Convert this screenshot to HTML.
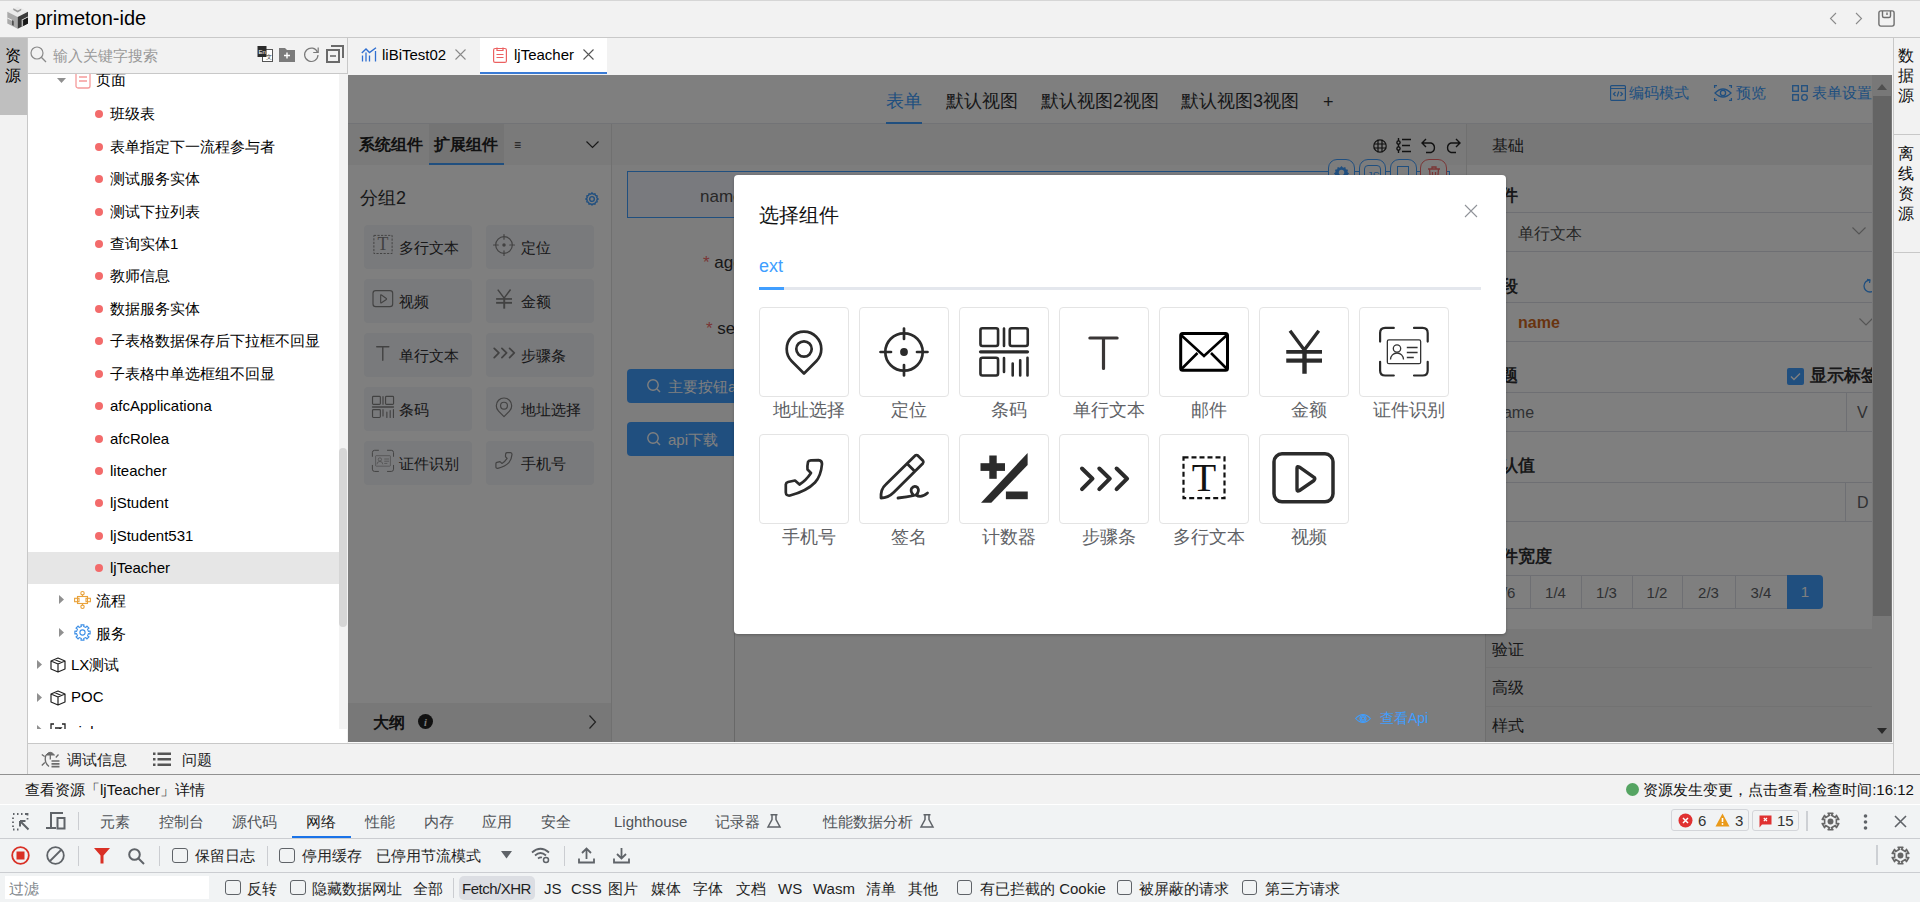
<!DOCTYPE html>
<html><head><meta charset="utf-8">
<style>
*{box-sizing:border-box}
html,body{margin:0;padding:0}
body{width:1920px;height:902px;overflow:hidden;position:relative;background:#f2f2f2;font-family:"Liberation Sans",sans-serif;color:#000}
.a{position:absolute}
.t{position:absolute;white-space:nowrap;line-height:1}
svg{position:absolute;overflow:visible}
</style></head><body>

<!-- TITLE BAR -->
<div class="a" style="left:0;top:0;width:1920px;height:1px;background:#d6d6d6"></div>
<div class="a" style="left:0;top:37px;width:1920px;height:1px;background:#c9c9c9"></div>
<div class="t" style="left:35px;top:8px;font-size:20px">primeton-ide</div>

<!-- LEFT STRIP -->
<div class="a" style="left:0;top:38px;width:27px;height:77px;background:#bfbfbf"></div>
<div class="a" style="left:27px;top:38px;width:1px;height:736px;background:#c8c8c8"></div>
<div class="t" style="left:5px;top:46px;font-size:16px;line-height:20px;width:16px;white-space:normal">资源</div>

<!-- LEFT PANEL -->
<div class="a" style="left:28px;top:73px;width:319px;height:1px;background:#c8c8c8"></div>
<div class="a" style="left:28px;top:74px;width:319px;height:669px;background:#fff"></div><div class="a" style="left:28px;top:74px;width:311px;height:655px;overflow:hidden" id="tree"><div class="a" style="left:67px;top:36px;width:8px;height:8px;border-radius:50%;background:#f36b6b"></div>
<div class="t" style="left:82px;top:24px;font-size:15px;line-height:32px">班级表</div>
<div class="a" style="left:67px;top:69px;width:8px;height:8px;border-radius:50%;background:#f36b6b"></div>
<div class="t" style="left:82px;top:57px;font-size:15px;line-height:32px">表单指定下一流程参与者</div>
<div class="a" style="left:67px;top:101px;width:8px;height:8px;border-radius:50%;background:#f36b6b"></div>
<div class="t" style="left:82px;top:89px;font-size:15px;line-height:32px">测试服务实体</div>
<div class="a" style="left:67px;top:134px;width:8px;height:8px;border-radius:50%;background:#f36b6b"></div>
<div class="t" style="left:82px;top:122px;font-size:15px;line-height:32px">测试下拉列表</div>
<div class="a" style="left:67px;top:166px;width:8px;height:8px;border-radius:50%;background:#f36b6b"></div>
<div class="t" style="left:82px;top:154px;font-size:15px;line-height:32px">查询实体1</div>
<div class="a" style="left:67px;top:198px;width:8px;height:8px;border-radius:50%;background:#f36b6b"></div>
<div class="t" style="left:82px;top:186px;font-size:15px;line-height:32px">教师信息</div>
<div class="a" style="left:67px;top:231px;width:8px;height:8px;border-radius:50%;background:#f36b6b"></div>
<div class="t" style="left:82px;top:219px;font-size:15px;line-height:32px">数据服务实体</div>
<div class="a" style="left:67px;top:263px;width:8px;height:8px;border-radius:50%;background:#f36b6b"></div>
<div class="t" style="left:82px;top:251px;font-size:15px;line-height:32px">子表格数据保存后下拉框不回显</div>
<div class="a" style="left:67px;top:296px;width:8px;height:8px;border-radius:50%;background:#f36b6b"></div>
<div class="t" style="left:82px;top:284px;font-size:15px;line-height:32px">子表格中单选框组不回显</div>
<div class="a" style="left:67px;top:328px;width:8px;height:8px;border-radius:50%;background:#f36b6b"></div>
<div class="t" style="left:82px;top:316px;font-size:15px;line-height:32px">afcApplicationa</div>
<div class="a" style="left:67px;top:361px;width:8px;height:8px;border-radius:50%;background:#f36b6b"></div>
<div class="t" style="left:82px;top:349px;font-size:15px;line-height:32px">afcRolea</div>
<div class="a" style="left:67px;top:393px;width:8px;height:8px;border-radius:50%;background:#f36b6b"></div>
<div class="t" style="left:82px;top:381px;font-size:15px;line-height:32px">liteacher</div>
<div class="a" style="left:67px;top:425px;width:8px;height:8px;border-radius:50%;background:#f36b6b"></div>
<div class="t" style="left:82px;top:413px;font-size:15px;line-height:32px">ljStudent</div>
<div class="a" style="left:67px;top:458px;width:8px;height:8px;border-radius:50%;background:#f36b6b"></div>
<div class="t" style="left:82px;top:446px;font-size:15px;line-height:32px">ljStudent531</div>
<div class="a" style="left:0;top:478px;width:311px;height:32px;background:#e6e6e6"></div>
<div class="a" style="left:67px;top:490px;width:8px;height:8px;border-radius:50%;background:#f36b6b"></div>
<div class="t" style="left:82px;top:478px;font-size:15px;line-height:32px">ljTeacher</div>
<svg style="left:29px;top:4px" width="10" height="6" viewBox="0 0 10 6"><path d="M0 0 h9 l-4.5 5 z" fill="#909090"/></svg>
<svg style="left:47px;top:-5px" width="16" height="20" viewBox="0 0 16 20"><rect x="1" y="1" width="14" height="18" rx="2" fill="none" stroke="#f59a9a" stroke-width="1.3"/><path d="M4 8 h8 M4 12 h8" stroke="#f59a9a" stroke-width="1.3"/></svg>
<div class="t" style="left:68px;top:-10px;font-size:15px;line-height:32px">页面</div>
<svg style="left:31px;top:521px" width="6" height="10" viewBox="0 0 6 10"><path d="M0 0 v9 l5 -4.5 z" fill="#909090"/></svg>
<svg style="left:46px;top:517px" width="17" height="18" viewBox="0 0 17 18" fill="none" stroke="#e9a23b" stroke-width="1.1"><circle cx="8.5" cy="2.2" r="1.7"/><circle cx="8.5" cy="15.8" r="1.7"/><path d="M8.5 3.9 V5.5 M8.5 12.5 V14.1"/><rect x="3.5" y="5.5" width="10" height="7"/><rect x="0.6" y="7.3" width="4.4" height="3.4"/><rect x="12" y="7.3" width="4.4" height="3.4"/></svg>
<div class="t" style="left:68px;top:511px;font-size:15px;line-height:32px">流程</div>
<svg style="left:31px;top:554px" width="6" height="10" viewBox="0 0 6 10"><path d="M0 0 v9 l5 -4.5 z" fill="#909090"/></svg>
<svg style="left:46px;top:550px" width="17" height="17" viewBox="0 0 17 17" fill="none" stroke="#3d8fe6" stroke-width="1.1" stroke-linejoin="round"><path d="M6.95 0.86 L10.05 0.86 L9.65 2.61 L11.85 3.52 L12.81 2.00 L15.00 4.19 L13.48 5.15 L14.39 7.35 L16.14 6.95 L16.14 10.05 L14.39 9.65 L13.48 11.85 L15.00 12.81 L12.81 15.00 L11.85 13.48 L9.65 14.39 L10.05 16.14 L6.95 16.14 L7.35 14.39 L5.15 13.48 L4.19 15.00 L2.00 12.81 L3.52 11.85 L2.61 9.65 L0.86 10.05 L0.86 6.95 L2.61 7.35 L3.52 5.15 L2.00 4.19 L4.19 2.00 L5.15 3.52 L7.35 2.61 Z"/><circle cx="8.5" cy="8.5" r="2.6"/></svg>
<div class="t" style="left:68px;top:544px;font-size:15px;line-height:32px">服务</div>
<svg style="left:9px;top:586px" width="6" height="10" viewBox="0 0 6 10"><path d="M0 0 v9 l5 -4.5 z" fill="#909090"/></svg>
<svg style="left:22px;top:583px" width="16" height="16" viewBox="0 0 16 16" fill="none" stroke="#222" stroke-width="1.2" stroke-linejoin="round"><path d="M8 1 L15 4 V12 L8 15 L1 12 V4 Z M1 4 L8 7 L15 4 M8 7 V15 M4.5 2.5 L11.5 5.5"/></svg>
<div class="t" style="left:43px;top:575px;font-size:15px;line-height:32px">LX测试</div>
<svg style="left:9px;top:619px" width="6" height="10" viewBox="0 0 6 10"><path d="M0 0 v9 l5 -4.5 z" fill="#909090"/></svg>
<svg style="left:22px;top:616px" width="16" height="16" viewBox="0 0 16 16" fill="none" stroke="#222" stroke-width="1.2" stroke-linejoin="round"><path d="M8 1 L15 4 V12 L8 15 L1 12 V4 Z M1 4 L8 7 L15 4 M8 7 V15 M4.5 2.5 L11.5 5.5"/></svg>
<div class="t" style="left:43px;top:607px;font-size:15px;line-height:32px">POC</div>
<div class="a" style="left:0;top:645px;width:311px;height:10px;overflow:hidden">
<svg style="left:9px;top:6px" width="6" height="10" viewBox="0 0 6 10"><path d="M0 0 v9 l5 -4.5 z" fill="#909090"/></svg>
<svg style="left:22px;top:3.5px" width="16" height="16" viewBox="0 0 16 16" fill="none" stroke="#222" stroke-width="1.3"><path d="M4 1 H1 V15 H4 M12 1 H15 V15 H12"/><path d="M5 5 H11 L5 11 H11"/></svg>
<div class="t" style="left:43px;top:-3px;font-size:15px;line-height:32px">ciolo</div>
</div>
</div>
<div class="a" style="left:339px;top:74px;width:8px;height:655px;background:#f3f3f3"></div>
<div class="a" style="left:339px;top:448px;width:8px;height:179px;background:#d6d6d6;border-radius:4px"></div>
<div class="a" style="left:347px;top:38px;width:1px;height:36px;background:#c8c8c8"></div>
<div class="t" style="left:53px;top:48px;font-size:15px;color:#999">输入关键字搜索</div>


<!-- search icons -->
<svg style="left:30px;top:46px" width="17" height="17" viewBox="0 0 17 17"><circle cx="7" cy="7" r="6" fill="none" stroke="#8a8a8a" stroke-width="1.2"/><line x1="11.3" y1="11.3" x2="16" y2="16" stroke="#8a8a8a" stroke-width="1.3"/></svg>
<svg style="left:257px;top:45px" width="16" height="18" viewBox="0 0 16 18"><rect x="5.5" y="4.5" width="10" height="12" fill="#fff" stroke="#555" stroke-width="1"/><rect x="0.5" y="1" width="9" height="11" fill="#2b2b2b"/><text x="1.5" y="8.5" font-size="6" fill="#fff" font-family="Liberation Sans">En</text><text x="9" y="14" font-size="6" fill="#333" font-family="Liberation Sans">文</text></svg>
<svg style="left:278px;top:46px" width="18" height="17" viewBox="0 0 18 17"><path d="M1 2 h6 l2 2 h8 v12 h-16 z" fill="#7b7b7b"/><path d="M9 6.5 v6 M6 9.5 h6" stroke="#fff" stroke-width="1.4"/></svg>
<svg style="left:303px;top:46px" width="17" height="17" viewBox="0 0 17 17"><path d="M14.5 6.2 A6.7 6.7 0 1 0 15 9" fill="none" stroke="#7a7a7a" stroke-width="1.2"/><path d="M15.2 1.5 v5 h-5" fill="none" stroke="#7a7a7a" stroke-width="1.2"/></svg>
<svg style="left:326px;top:45px" width="18" height="18" viewBox="0 0 18 18"><path d="M5 1 h12 v12" fill="none" stroke="#6a6a6a" stroke-width="2"/><rect x="1" y="5" width="12" height="12" fill="none" stroke="#6a6a6a" stroke-width="2"/><path d="M4 11 h6" stroke="#6a6a6a" stroke-width="1.6"/></svg>

<!-- TAB BAR -->
<div class="a" style="left:480px;top:38px;width:127px;height:36px;background:#fff"></div>
<div class="a" style="left:480px;top:72px;width:127px;height:2px;background:#3a7bd5"></div>
<svg style="left:361px;top:47px" width="16" height="15" viewBox="0 0 16 15" fill="none" stroke="#2f6fd1" stroke-width="1.4"><path d="M0.8 6 L5 2 L8.5 5.5 L15 0.8"/><path d="M1.5 8.5 V14.5 M5 5.5 V14.5 M8.5 8.5 V14.5 M14.5 4 V14.5" stroke-width="1.3"/></svg>
<div class="t" style="left:382px;top:47px;font-size:15px">liBiTest02</div>
<svg style="left:455px;top:49px" width="11" height="11" viewBox="0 0 11 11"><path d="M0.5 0.5 L10.5 10.5 M10.5 0.5 L0.5 10.5" stroke="#8a8a8a" stroke-width="1.1"/></svg>
<svg style="left:493px;top:47px" width="14" height="16" viewBox="0 0 14 16" fill="none" stroke="#ec6161" stroke-width="1.2"><rect x="0.6" y="1.5" width="12.8" height="13.9" rx="1.5"/><path d="M4 0.6 V3.5 H10 V0.6 M3.5 7.5 H10.5 M3.5 10.5 H10.5"/></svg>
<div class="t" style="left:514px;top:47px;font-size:15px">ljTeacher</div>
<svg style="left:583px;top:49px" width="11" height="11" viewBox="0 0 11 11"><path d="M0.5 0.5 L10.5 10.5 M10.5 0.5 L0.5 10.5" stroke="#555" stroke-width="1.1"/></svg>

<!-- CONTENT -->
<div class="a" id="content" style="left:348px;top:75px;width:1544px;height:667px;background:#fff;overflow:hidden"><div class="a" style="left:-348px;top:-75px;width:1920px;height:902px">
<!-- view tabs -->
<div class="a" style="left:348px;top:123px;width:1524px;height:1px;background:#e4e7ed"></div>
<div class="t" style="left:886px;top:92px;font-size:18px;color:#409eff">表单</div>
<div class="a" style="left:886px;top:122px;width:36px;height:2px;background:#409eff"></div>
<div class="t" style="left:946px;top:92px;font-size:18px;color:#303133">默认视图</div>
<div class="t" style="left:1041px;top:92px;font-size:18px;color:#303133">默认视图2视图</div>
<div class="t" style="left:1181px;top:92px;font-size:18px;color:#303133">默认视图3视图</div>
<div class="t" style="left:1323px;top:93px;font-size:18px;color:#303133">+</div>
<svg style="left:1610px;top:85px" width="16" height="16" viewBox="0 0 16 16" fill="none" stroke="#409eff" stroke-width="1.2"><rect x="0.6" y="0.6" width="14.8" height="14.8" rx="1"/><path d="M0.6 3.5 h14.8 M5.5 7 l-2 2 2 2 M10.5 7 l2 2 -2 2 M8.8 6.5 l-1.6 5"/></svg>
<div class="t" style="left:1629px;top:85px;font-size:15px;color:#409eff">编码模式</div>
<svg style="left:1714px;top:85px" width="18" height="16" viewBox="0 0 18 16" fill="none" stroke="#409eff" stroke-width="1.3"><path d="M1 8 Q9 0 17 8 Q9 16 1 8 Z"/><circle cx="9" cy="8" r="2.6"/><path d="M0.6 3 v-2.4 h2.4 M17.4 3 v-2.4 h-2.4 M0.6 13 v2.4 h2.4 M17.4 13 v2.4 h-2.4"/></svg>
<div class="t" style="left:1736px;top:85px;font-size:15px;color:#409eff">预览</div>
<svg style="left:1792px;top:85px" width="16" height="16" viewBox="0 0 16 16" fill="none" stroke="#409eff" stroke-width="1.3"><rect x="0.7" y="0.7" width="5.6" height="5.6"/><rect x="9.7" y="0.7" width="5.6" height="5.6"/><rect x="0.7" y="9.7" width="5.6" height="5.6"/><circle cx="12.5" cy="12.5" r="2.8"/></svg>
<div class="t" style="left:1812px;top:85px;font-size:15px;color:#409eff">表单设置</div>

<!-- left components panel -->
<div class="a" style="left:348px;top:124px;width:263px;height:41px;background:#f4f4f4"></div>
<div class="a" style="left:429px;top:124px;width:75px;height:41px;background:#e8e8e8"></div>
<div class="a" style="left:429px;top:163px;width:75px;height:2px;background:#409eff"></div>
<div class="t" style="left:359px;top:137px;font-size:16px;font-weight:bold;color:#222">系统组件</div>
<div class="t" style="left:434px;top:137px;font-size:16px;font-weight:bold;color:#222">扩展组件</div>
<div class="t" style="left:514px;top:139px;font-size:12px;color:#333">&#8801;</div>
<svg style="left:586px;top:141px" width="13" height="8" viewBox="0 0 13 8"><path d="M0.5 0.5 l6 6 6-6" fill="none" stroke="#333" stroke-width="1.2"/></svg>
<div class="a" style="left:611px;top:124px;width:1px;height:618px;background:#e0e0e0"></div>
<div class="t" style="left:360px;top:189px;font-size:18px;color:#303133">分组2</div>
<svg style="left:585px;top:192px" width="14" height="14" viewBox="0 0 24 24" fill="none" stroke="#409eff" stroke-width="2.4"><path d="M12 1.5 l2 2.2 3-.6 .9 2.9 2.9.9 -.6 3 2.2 2 -2.2 2 .6 3 -2.9.9 -.9 2.9 -3-.6 -2 2.2 -2-2.2 -3 .6 -.9-2.9 -2.9-.9 .6-3 -2.2-2 2.2-2 -.6-3 2.9-.9 .9-2.9 3 .6 z"/><circle cx="12" cy="12" r="4"/></svg>
<div class="a" style="left:364px;top:225px;width:108px;height:44px;background:#f3f4f8;border-radius:4px"></div>
<svg style="left:363.0px;top:224.5px" width="40" height="40" viewBox="0 0 90 90"><rect x="24.5" y="23.4" width="41" height="40.7" fill="none" stroke="#858585" stroke-width="2.2" stroke-dasharray="5 3"/><text x="45" y="57" text-anchor="middle" font-family="Liberation Serif" font-size="40" fill="#858585">T</text></svg>
<div class="t" style="left:399px;top:240px;font-size:15px;color:#303133">多行文本</div>
<div class="a" style="left:486px;top:225px;width:108px;height:44px;background:#f3f4f8;border-radius:4px"></div>
<svg style="left:483.8px;top:224.5px" width="40" height="40" viewBox="0 0 90 90"><circle cx="45" cy="45" r="18.7" fill="none" stroke="#858585" stroke-linecap="round" stroke-linejoin="round" stroke-width="2.7"/><path d="M21.5 45 H32 M58 45 H68.5 M45 21.5 V32 M45 58 V68.5" fill="none" stroke="#858585" stroke-linecap="round" stroke-linejoin="round" stroke-width="2.7"/><circle cx="45" cy="45" r="3.9" fill="#858585"/></svg>
<div class="t" style="left:521px;top:240px;font-size:15px;color:#303133">定位</div>
<div class="a" style="left:364px;top:279px;width:108px;height:44px;background:#f3f4f8;border-radius:4px"></div>
<svg style="left:368.0px;top:283.5px" width="30" height="30" viewBox="0 0 90 90"><rect x="15" y="19.8" width="59" height="48" rx="8" fill="none" stroke="#858585" stroke-width="3.5"/><path d="M38 34 V55.5 Q38 58 40.5 56.5 L55 46.5 Q56.5 44.8 55 43.3 L40.5 33.2 Q38 31.8 38 34 Z" fill="none" stroke="#858585" stroke-width="3.4" stroke-linejoin="round"/></svg>
<div class="t" style="left:399px;top:294px;font-size:15px;color:#303133">视频</div>
<div class="a" style="left:486px;top:279px;width:108px;height:44px;background:#f3f4f8;border-radius:4px"></div>
<svg style="left:483.8px;top:278.5px" width="40" height="40" viewBox="0 0 90 90"><path d="M31 23.8 L45.3 43 L59.75 23.8" fill="none" stroke="#858585" stroke-width="3.4"/><rect x="27.25" y="43" width="35.75" height="3.75" fill="#858585"/><rect x="27.25" y="51.5" width="35.75" height="4.2" fill="#858585"/><rect x="43.3" y="43" width="4.4" height="23.75" fill="#858585"/></svg>
<div class="t" style="left:521px;top:294px;font-size:15px;color:#303133">金额</div>
<div class="a" style="left:364px;top:333px;width:108px;height:44px;background:#f3f4f8;border-radius:4px"></div>
<svg style="left:363.0px;top:332.5px" width="40" height="40" viewBox="0 0 90 90"><path d="M30.9 31 H58.1 M44.5 31 V61.5" fill="none" stroke="#858585" stroke-width="3.2" stroke-linecap="round"/></svg>
<div class="t" style="left:399px;top:348px;font-size:15px;color:#303133">单行文本</div>
<div class="a" style="left:486px;top:333px;width:108px;height:44px;background:#f3f4f8;border-radius:4px"></div>
<svg style="left:483.8px;top:332.5px" width="40" height="40" viewBox="0 0 90 90"><path d="M23 34.5 L33.5 44.7 L23 55.2 M40.3 34.5 L50.8 44.7 L40.3 55.2 M57.6 34.5 L68.1 44.7 L57.6 55.2" fill="none" stroke="#858585" stroke-linecap="round" stroke-linejoin="round" stroke-width="4"/></svg>
<div class="t" style="left:521px;top:348px;font-size:15px;color:#303133">步骤条</div>
<div class="a" style="left:364px;top:387px;width:108px;height:44px;background:#f3f4f8;border-radius:4px"></div>
<svg style="left:363.0px;top:386.5px" width="40" height="40" viewBox="0 0 90 90"><g fill="none" stroke="#858585" stroke-linecap="round" stroke-linejoin="round" stroke-width="2.6"><rect x="21.45" y="21.25" width="17.6" height="17.8" rx="2"/><rect x="50.75" y="21.25" width="18" height="17.8" rx="2"/><rect x="21.45" y="50.75" width="17.6" height="17.8" rx="2"/><path d="M45 21.5 V39 M45 51 V65 M53.7 56.5 V68.5 M61.2 53.2 V68.5 M68.5 50.8 V68.5"/></g><path d="M21.5 44.85 H68.5" fill="none" stroke="#858585" stroke-linecap="round" stroke-linejoin="round" stroke-width="3.2"/></svg>
<div class="t" style="left:399px;top:402px;font-size:15px;color:#303133">条码</div>
<div class="a" style="left:486px;top:387px;width:108px;height:44px;background:#f3f4f8;border-radius:4px"></div>
<svg style="left:483.8px;top:386.5px" width="40" height="40" viewBox="0 0 90 90"><path d="M45 66.5 L32.77 54.23 A17.3 17.3 0 1 1 57.23 54.23 Z" fill="none" stroke="#858585" stroke-linecap="round" stroke-linejoin="round" stroke-width="2.7"/><circle cx="45" cy="42" r="7.7" fill="none" stroke="#858585" stroke-linecap="round" stroke-linejoin="round" stroke-width="2.7"/></svg>
<div class="t" style="left:521px;top:402px;font-size:15px;color:#303133">地址选择</div>
<div class="a" style="left:364px;top:441px;width:108px;height:44px;background:#f3f4f8;border-radius:4px"></div>
<svg style="left:363.0px;top:440.5px" width="40" height="40" viewBox="0 0 90 90"><g fill="none" stroke="#858585" stroke-linecap="round" stroke-linejoin="round" stroke-width="2.2"><path d="M21.1 34.6 V26 Q21.1 20.9 26.2 20.9 H34.8 M55 20.9 H63.6 Q68.7 20.9 68.7 26 V34.6 M21.1 54.8 V63.4 Q21.1 68.5 26.2 68.5 H34.8 M55 68.5 H63.6 Q68.7 68.5 68.7 63.4 V54.8"/></g><g fill="none" stroke="#858585" stroke-width="1.3"><rect x="28.35" y="32.95" width="33.3" height="23.7" rx="1.5"/><circle cx="38" cy="41.5" r="3.7"/><path d="M31.5 52.5 A6.5 6.5 0 0 1 44.5 52.5 M47.8 40.5 H58.6 M47.8 45.5 H58.6 M47.8 50.5 H54.8"/></g></svg>
<div class="t" style="left:399px;top:456px;font-size:15px;color:#303133">证件识别</div>
<div class="a" style="left:486px;top:441px;width:108px;height:44px;background:#f3f4f8;border-radius:4px"></div>
<svg style="left:483.8px;top:440.5px" width="40" height="40" viewBox="0 0 90 90"><path d="M52 39 L48.5 35.5 Q48 33 49 28 Q49.5 26.5 52 26.3 L59.5 26.2 Q63 26.5 63 30 Q62 42 56 48.5 Q48 57 31 61.5 Q27 62 26.8 58.5 L26.8 50.5 Q27 48.5 29 48 L36 46.5 L40.5 50.5 Q47 46.5 52 39 Z" fill="none" stroke="#858585" stroke-linecap="round" stroke-linejoin="round" stroke-width="2.7"/></svg>
<div class="t" style="left:521px;top:456px;font-size:15px;color:#303133">手机号</div>
<div class="a" style="left:348px;top:703px;width:263px;height:39px;background:#f0f0f0"></div>
<div class="t" style="left:373px;top:715px;font-size:16px;font-weight:bold;color:#222">大纲</div>
<svg style="left:418px;top:714px" width="15" height="15" viewBox="0 0 16 16"><circle cx="8" cy="8" r="8" fill="#222"/><text x="8" y="12.5" text-anchor="middle" font-size="11" font-style="italic" font-weight="bold" fill="#fff" font-family="Liberation Serif">i</text></svg>
<svg style="left:589px;top:715px" width="8" height="14" viewBox="0 0 8 14"><path d="M0.5 0.5 l6 6.5 -6 6.5" fill="none" stroke="#444" stroke-width="1.2"/></svg>

<!-- canvas -->
<div class="a" style="left:612px;top:124px;width:855px;height:618px;background:#fafafa"></div>
<div class="a" style="left:612px;top:124px;width:855px;height:41px;background:#f5f5f5"></div>
<div class="a" style="left:1466px;top:124px;width:1px;height:505px;background:#e0e0e0"></div>
<div class="a" style="left:734px;top:630px;width:1px;height:112px;background:#d0d0d0"></div>
<svg style="left:1373px;top:139px" width="14" height="14" viewBox="0 0 14 14" fill="none" stroke="#222" stroke-width="1.2"><circle cx="7" cy="7" r="6.2"/><path d="M0.7 5 h12.6 M0.7 9 h12.6 M5 0.7 v12.6 M9 0.7 v12.6"/></svg>
<svg style="left:1396px;top:138px" width="16" height="15" viewBox="0 0 16 15" fill="none" stroke="#222" stroke-width="1.4"><path d="M2.5 0 v15 M6 1.5 h9 M6 7.5 h8 M6 13.5 h9"/><circle cx="2.5" cy="4.5" r="1.6" fill="#fff"/><circle cx="2.5" cy="10.5" r="1.6" fill="#fff"/></svg>
<svg style="left:1421px;top:138px" width="16" height="15" viewBox="0 0 16 15" fill="none" stroke="#222" stroke-width="1.4"><path d="M5 1 l-4 4 4 4 M1 5 h9 a5 5 0 0 1 0 9.5 h-5"/></svg>
<svg style="left:1445px;top:138px" width="16" height="15" viewBox="0 0 16 15" fill="none" stroke="#222" stroke-width="1.4"><path d="M11 1 l4 4 -4 4 M15 5 h-9 a5 5 0 0 0 0 9.5 h5"/></svg>
<!-- selected form item -->
<div class="a" style="left:627px;top:171px;width:823px;height:47px;border:1px solid #409eff;background:#f3f5fc"></div>
<div class="t" style="left:700px;top:188px;font-size:17px;color:#505050">name</div>
<div class="a" style="left:1328px;top:159px;width:27px;height:30px;border:1.3px solid #409eff;border-radius:9px;background:#fafafa"></div>
<div class="a" style="left:1359px;top:159px;width:27px;height:30px;border:1.3px solid #409eff;border-radius:9px;background:#fafafa"></div>
<div class="a" style="left:1390px;top:159px;width:27px;height:30px;border:1.3px solid #409eff;border-radius:9px;background:#fafafa"></div>
<div class="a" style="left:1420px;top:159px;width:27px;height:30px;border:1.3px solid #f56c6c;border-radius:9px;background:#fafafa"></div>
<svg style="left:1335px;top:166px" width="13" height="13" viewBox="0 0 24 24"><path d="M12 0 l3 3 4-1 1 4 4 1 -1 4 3 3 -3 3 1 4 -4 1 -1 4 -4-1 -3 3 -3-3 -4 1 -1-4 -4-1 1-4 -3-3 3-3 -1-4 4-1 1-4 4 1 z" fill="#409eff"/><circle cx="12" cy="12" r="5" fill="#fafafa"/></svg>
<div class="a" style="left:1364px;top:165px;width:17px;height:20px;border:1.5px solid #409eff;border-radius:4px"></div>
<div class="t" style="left:1367px;top:171px;font-size:11px;color:#409eff">JS</div>
<div class="a" style="left:1397px;top:166px;width:12px;height:16px;border:1.5px solid #409eff"></div>
<svg style="left:1427px;top:166px" width="14" height="16" viewBox="0 0 14 16" fill="none" stroke="#f56c6c" stroke-width="1.3"><path d="M1 3 h12 M5 3 v-2 h4 v2 M2.5 3 l1 12 h7 l1-12 M5.5 6 v7 M8.5 6 v7"/></svg>
<div class="t" style="left:703px;top:254px;font-size:17px;color:#303133"><span style="color:#f56c6c">*</span> age</div>
<div class="t" style="left:706px;top:320px;font-size:17px;color:#303133"><span style="color:#f56c6c">*</span> sex</div>
<div class="a" style="left:627px;top:369px;width:200px;height:34px;background:#409eff;border-radius:4px"></div>
<div class="a" style="left:627px;top:422px;width:160px;height:34px;background:#409eff;border-radius:4px"></div>
<svg style="left:647px;top:379px" width="14" height="14" viewBox="0 0 14 14" fill="none" stroke="#fff" stroke-width="1.4"><circle cx="6" cy="6" r="5.2"/><path d="M10 10 l3 3"/></svg>
<svg style="left:647px;top:432px" width="14" height="14" viewBox="0 0 14 14" fill="none" stroke="#fff" stroke-width="1.4"><circle cx="6" cy="6" r="5.2"/><path d="M10 10 l3 3"/></svg>
<div class="t" style="left:668px;top:379px;font-size:15px;color:#fff">主要按钮a</div>
<div class="t" style="left:668px;top:432px;font-size:15px;color:#fff">api下载</div>

<!-- right panel -->
<div class="a" style="left:1467px;top:124px;width:405px;height:41px;background:#f0f0f0"></div>
<div class="t" style="left:1492px;top:138px;font-size:16px;color:#303133">基础</div>
<div class="t" style="left:1484px;top:187px;font-size:17px;font-weight:bold;color:#303133">组件</div>
<div class="a" style="left:1492px;top:212px;width:380px;height:1px;background:#dcdfe6"></div>
<div class="a" style="left:1492px;top:251px;width:380px;height:1px;background:#dcdfe6"></div>
<div class="t" style="left:1518px;top:226px;font-size:16px;color:#505050">单行文本</div>
<svg style="left:1852px;top:227px" width="14" height="8" viewBox="0 0 14 8"><path d="M0.5 0.5 l6.5 6.5 6.5-6.5" fill="none" stroke="#aaa" stroke-width="1.2"/></svg>
<div class="t" style="left:1484px;top:278px;font-size:17px;font-weight:bold;color:#303133">字段</div>
<svg style="left:1863px;top:279px" width="14" height="14" viewBox="0 0 14 14" fill="none" stroke="#409eff" stroke-width="1.3"><path d="M7 1 a6 6 0 1 0 6 6"/><path d="M4 0.5 l3 0.5 -0.5 3"/></svg>
<div class="a" style="left:1492px;top:302px;width:380px;height:1px;background:#dcdfe6"></div>
<div class="a" style="left:1492px;top:341px;width:380px;height:1px;background:#dcdfe6"></div>
<div class="t" style="left:1518px;top:315px;font-size:16px;font-weight:bold;color:#d2691e">name</div>
<svg style="left:1859px;top:318px" width="14" height="8" viewBox="0 0 14 8"><path d="M0.5 0.5 l6.5 6.5 6.5-6.5" fill="none" stroke="#aaa" stroke-width="1.2"/></svg>
<div class="t" style="left:1484px;top:367px;font-size:17px;font-weight:bold;color:#303133">标题</div>
<div class="a" style="left:1787px;top:368px;width:17px;height:17px;background:#409eff;border-radius:2px"></div>
<svg style="left:1790px;top:372px" width="11" height="9" viewBox="0 0 11 9"><path d="M1 4.5 l3 3 6-6" fill="none" stroke="#fff" stroke-width="1.4"/></svg>
<div class="t" style="left:1810px;top:367px;font-size:17px;font-weight:bold;color:#303133">显示标签</div>
<div class="a" style="left:1492px;top:392px;width:380px;height:1px;background:#dcdfe6"></div>
<div class="a" style="left:1492px;top:431px;width:380px;height:1px;background:#dcdfe6"></div>
<div class="a" style="left:1846px;top:393px;width:1px;height:38px;background:#dcdfe6"></div>
<div class="t" style="left:1494px;top:405px;font-size:16px;color:#606266">name</div>
<div class="t" style="left:1857px;top:405px;font-size:16px;color:#606266">V</div>
<div class="t" style="left:1484px;top:457px;font-size:17px;font-weight:bold;color:#303133">默认值</div>
<div class="a" style="left:1492px;top:482px;width:380px;height:1px;background:#dcdfe6"></div>
<div class="a" style="left:1492px;top:521px;width:380px;height:1px;background:#dcdfe6"></div>
<div class="a" style="left:1845px;top:483px;width:1px;height:38px;background:#dcdfe6"></div>
<div class="t" style="left:1857px;top:495px;font-size:16px;color:#606266">D</div>
<div class="t" style="left:1484px;top:548px;font-size:17px;font-weight:bold;color:#303133">组件宽度</div>
<div class="a" style="left:1480px;top:575px;width:51px;height:34px;border:1px solid #dcdfe6;border-left:0"></div>
<div class="t" style="left:1480px;top:576px;width:50px;line-height:34px;text-align:center;font-size:15px;color:#606266">1/6</div>
<div class="a" style="left:1530px;top:575px;width:52px;height:34px;border:1px solid #dcdfe6;border-left:0"></div>
<div class="t" style="left:1530px;top:576px;width:51px;line-height:34px;text-align:center;font-size:15px;color:#606266">1/4</div>
<div class="a" style="left:1581px;top:575px;width:52px;height:34px;border:1px solid #dcdfe6;border-left:0"></div>
<div class="t" style="left:1581px;top:576px;width:51px;line-height:34px;text-align:center;font-size:15px;color:#606266">1/3</div>
<div class="a" style="left:1632px;top:575px;width:51px;height:34px;border:1px solid #dcdfe6;border-left:0"></div>
<div class="t" style="left:1632px;top:576px;width:50px;line-height:34px;text-align:center;font-size:15px;color:#606266">1/2</div>
<div class="a" style="left:1682px;top:575px;width:54px;height:34px;border:1px solid #dcdfe6;border-left:0"></div>
<div class="t" style="left:1682px;top:576px;width:53px;line-height:34px;text-align:center;font-size:15px;color:#606266">2/3</div>
<div class="a" style="left:1735px;top:575px;width:53px;height:34px;border:1px solid #dcdfe6;border-left:0"></div>
<div class="t" style="left:1735px;top:576px;width:52px;line-height:34px;text-align:center;font-size:15px;color:#606266">3/4</div>
<div class="a" style="left:1787px;top:575px;width:36px;height:34px;background:#409eff;border-radius:0 4px 4px 0"></div>
<div class="t" style="left:1787px;top:575px;width:36px;line-height:34px;text-align:center;font-size:15px;color:#fff">1</div>
<div class="a" style="left:1467px;top:629px;width:18px;height:113px;background:#fafafa"></div>
<div class="a" style="left:1486px;top:629px;width:386px;height:113px;background:#f0f0f0"></div>
<div class="a" style="left:1485px;top:629px;width:1px;height:113px;background:#dcdcdc"></div>
<div class="a" style="left:1486px;top:667px;width:386px;height:1px;background:#e4e4e4"></div>
<div class="a" style="left:1486px;top:706px;width:386px;height:1px;background:#e4e4e4"></div>
<div class="t" style="left:1492px;top:642px;font-size:16px;color:#303133">验证</div>
<div class="t" style="left:1492px;top:680px;font-size:16px;color:#303133">高级</div>
<div class="t" style="left:1492px;top:718px;font-size:16px;color:#303133">样式</div>
<!-- scrollbar -->
<div class="a" style="left:1872px;top:75px;width:20px;height:667px;background:#f0f0f0"></div>
<div class="a" style="left:1873px;top:96px;width:18px;height:520px;background:#c8c8c8"></div>
<svg style="left:1877px;top:84px" width="10" height="6" viewBox="0 0 10 6"><path d="M0 6 L5 0 L10 6 z" fill="#a0a0a0"/></svg>
<svg style="left:1877px;top:728px" width="10" height="6" viewBox="0 0 10 6"><path d="M0 0 L5 6 L10 0 z" fill="#505050"/></svg>
</div>

</div>
<div class="a" style="left:348px;top:75px;width:1544px;height:667px;background:rgba(0,0,0,.5)"></div>

<svg style="left:1355px;top:713px" width="16" height="11" viewBox="0 0 16 11" fill="none" stroke="#409eff" stroke-width="1.1"><path d="M0.6 5.5 Q8 -2.5 15.4 5.5 Q8 13.5 0.6 5.5 Z"/><circle cx="8" cy="5.5" r="3"/><circle cx="8" cy="5.5" r="1.6"/></svg>
<div class="t" style="left:1380px;top:711px;font-size:14px;color:#409eff">查看Api</div>
<!-- RIGHT STRIP -->
<div class="a" style="left:1893px;top:38px;width:1px;height:736px;background:#c8c8c8"></div>
<div class="a" style="left:1893px;top:134px;width:27px;height:1px;background:#c8c8c8"></div>
<div class="a" style="left:1893px;top:252px;width:27px;height:1px;background:#c8c8c8"></div>

<!-- BOTTOM PANEL -->
<div class="a" style="left:348px;top:742px;width:1545px;height:1px;background:#fafafa"></div><div class="a" style="left:28px;top:743px;width:1865px;height:1px;background:#c8c8c8"></div>
<div class="a" style="left:0;top:774px;width:1920px;height:1px;background:#919191"></div>

<!-- DEVTOOLS -->
<div class="a" style="left:0;top:804px;width:1920px;height:98px;background:#f1f3f4;border-top:1px solid #fff"></div>
<div class="a" style="left:0;top:838px;width:1920px;height:1px;background:#cbcdd1"></div>
<div class="a" style="left:0;top:872px;width:1920px;height:1px;background:#cbcdd1"></div>

<!-- bottom panel -->
<svg style="left:41px;top:750px" width="19" height="18" viewBox="0 0 19 18" fill="none" stroke="#6b6b6b" stroke-width="1.3"><path d="M5 5 Q9 -0.5 13.5 5 Z" fill="#6b6b6b" stroke-width="1"/><path d="M5 5 Q2.5 12 8 16.5 M9.3 5 V9.5 M0.8 4.5 L3.6 6.5 M0.8 15.5 L3.8 12.5 M17.5 4.5 L14.8 7.5"/><path d="M10.5 11 h8 M10.5 13.8 h8 M10.5 16.6 h8" stroke-width="1.7"/></svg>
<div class="t" style="left:67px;top:752px;font-size:15px;color:#1a1a1a">调试信息</div>
<svg style="left:153px;top:752px" width="18" height="15" viewBox="0 0 18 15" fill="#555"><rect x="0" y="0.5" width="2.5" height="2.5"/><rect x="0" y="6" width="2.5" height="2.5"/><rect x="0" y="11.5" width="2.5" height="2.5"/><rect x="4.5" y="0.5" width="13.5" height="2.5"/><rect x="4.5" y="6" width="13.5" height="2.5"/><rect x="4.5" y="11.5" width="13.5" height="2.5"/></svg>
<div class="t" style="left:182px;top:752px;font-size:15px;color:#1a1a1a">问题</div>
<!-- status bar -->
<div class="t" style="left:25px;top:782px;font-size:15px;color:#111">查看资源「ljTeacher」详情</div>
<div class="a" style="left:1626px;top:783px;width:13px;height:13px;border-radius:50%;background:#55a462"></div>
<div class="t" style="left:1643px;top:782px;font-size:15px;color:#111">资源发生变更，点击查看,检查时间:16:12</div>

<!-- devtools row1 -->
<svg style="left:12px;top:813px" width="18" height="18" viewBox="0 0 18 18" fill="none" stroke="#5f6368" stroke-width="1.6"><path d="M1 1 h1.5 M5 1 h1.5 M9 1 h1.5 M13 1 h2.5 v1.5 M15.5 5 v1.5 M1 4.5 v1.5 M1 8.5 v1.5 M1 12.5 v1.5 M1 16.5 h1.5 M5 16.5 h1.5" stroke-width="1.8"/><path d="M8 8 L16.5 16.5 M8 8 H13.5 M8 8 V13.5" stroke-width="2"/></svg>
<svg style="left:45px;top:812px" width="21" height="18" viewBox="0 0 21 18" fill="none" stroke="#5f6368" stroke-width="2"><path d="M18 1 H6 V16 M1 16 H11"/><rect x="12.5" y="6" width="7" height="10.5"/></svg>
<div class="a" style="left:78px;top:812px;width:1px;height:18px;background:#cbcdd1"></div>
<div class="t" style="left:100px;top:814px;font-size:15px;color:#505458">元素</div>
<div class="t" style="left:159px;top:814px;font-size:15px;color:#505458">控制台</div>
<div class="t" style="left:232px;top:814px;font-size:15px;color:#505458">源代码</div>
<div class="t" style="left:306px;top:814px;font-size:15px;color:#1f1f1f">网络</div>
<div class="a" style="left:292px;top:836px;width:59px;height:2px;background:#1a73e8"></div>
<div class="t" style="left:365px;top:814px;font-size:15px;color:#505458">性能</div>
<div class="t" style="left:424px;top:814px;font-size:15px;color:#505458">内存</div>
<div class="t" style="left:482px;top:814px;font-size:15px;color:#505458">应用</div>
<div class="t" style="left:541px;top:814px;font-size:15px;color:#505458">安全</div>
<div class="t" style="left:614px;top:814px;font-size:15px;color:#505458">Lighthouse</div>
<div class="t" style="left:715px;top:814px;font-size:15px;color:#505458">记录器</div>
<svg style="left:767px;top:814px" width="14" height="14" viewBox="0 0 14 14" fill="none" stroke="#5f6368" stroke-width="1.5"><path d="M3.5 0.8 H10.5 M5 0.8 V5.5 L1 13 H13 L9 5.5 V0.8"/></svg>
<div class="t" style="left:823px;top:814px;font-size:15px;color:#505458">性能数据分析</div>
<svg style="left:920px;top:814px" width="14" height="14" viewBox="0 0 14 14" fill="none" stroke="#5f6368" stroke-width="1.5"><path d="M3.5 0.8 H10.5 M5 0.8 V5.5 L1 13 H13 L9 5.5 V0.8"/></svg>
<!-- badges -->
<div class="a" style="left:1671px;top:809px;width:78px;height:22px;border:1px solid #d3d5d9;border-radius:3px;background:#f1f3f4"></div>
<svg style="left:1678px;top:813px" width="15" height="15" viewBox="0 0 15 15"><circle cx="7.5" cy="7.5" r="7" fill="#e03131"/><path d="M5 5 L10 10 M10 5 L5 10" stroke="#fff" stroke-width="1.5"/></svg>
<div class="t" style="left:1698px;top:813px;font-size:15px;color:#333">6</div>
<svg style="left:1715px;top:813px" width="15" height="14" viewBox="0 0 15 14"><path d="M7.5 0.5 L14.5 13.5 H0.5 Z" fill="#ea9a1a"/><path d="M7.5 5 V9" stroke="#fff" stroke-width="1.6"/><circle cx="7.5" cy="11" r="0.9" fill="#fff"/></svg>
<div class="t" style="left:1735px;top:813px;font-size:15px;color:#333">3</div>
<div class="a" style="left:1752px;top:810px;width:47px;height:21px;border:1px solid #d3d5d9;border-radius:3px;background:#f1f3f4"></div>
<svg style="left:1759px;top:815px" width="13" height="13" viewBox="0 0 13 13"><path d="M0.5 0.5 H12.5 V9.5 H3 L0.5 12.5 Z" fill="#e03131"/><path d="M4.8 3 L8 6.2 M8 3 L4.8 6.2" stroke="#fff" stroke-width="1.2"/></svg>
<div class="t" style="left:1777px;top:813px;font-size:15px;color:#333">15</div>
<div class="a" style="left:1806px;top:811px;width:2px;height:20px;background:#cdd0d4"></div>
<svg style="left:1821px;top:812px" width="19" height="19" viewBox="0 0 20 20"><path d="M7.51 1.35 L12.49 1.35 L11.07 3.49 L15.10 5.81 L16.25 3.52 L18.73 7.83 L16.18 7.67 L16.18 12.33 L18.73 12.17 L16.25 16.48 L15.10 14.19 L11.07 16.51 L12.49 18.65 L7.51 18.65 L8.93 16.51 L4.90 14.19 L3.75 16.48 L1.27 12.17 L3.82 12.33 L3.82 7.67 L1.27 7.83 L3.75 3.52 L4.90 5.81 L8.93 3.49 Z" fill="none" stroke="#666" stroke-width="1.7" stroke-linejoin="round"/><circle cx="10" cy="10" r="3.1" fill="#666"/></svg>
<svg style="left:1863px;top:814px" width="5" height="16" viewBox="0 0 5 16" fill="#5f6368"><circle cx="2.5" cy="2" r="1.8"/><circle cx="2.5" cy="8" r="1.8"/><circle cx="2.5" cy="14" r="1.8"/></svg>
<svg style="left:1894px;top:815px" width="13" height="13" viewBox="0 0 13 13"><path d="M1 1 L12 12 M12 1 L1 12" stroke="#5f6368" stroke-width="1.6"/></svg>

<!-- devtools row2 -->
<svg style="left:11px;top:846px" width="19" height="19" viewBox="0 0 19 19"><circle cx="9.5" cy="9.5" r="8.3" fill="none" stroke="#d93025" stroke-width="1.8"/><rect x="5.5" y="5.5" width="8" height="8" fill="#d93025"/></svg>
<svg style="left:46px;top:846px" width="19" height="19" viewBox="0 0 19 19" fill="none" stroke="#5f6368" stroke-width="1.8"><circle cx="9.5" cy="9.5" r="8.3"/><path d="M4 15 L15 4"/></svg>
<div class="a" style="left:78px;top:846px;width:1px;height:20px;background:#cbcdd1"></div>
<svg style="left:94px;top:848px" width="16" height="16" viewBox="0 0 16 16"><path d="M0 0 H16 L9.5 7.5 V15.5 H6.5 V7.5 Z" fill="#d93025"/></svg>
<svg style="left:128px;top:848px" width="17" height="17" viewBox="0 0 17 17" fill="none" stroke="#5f6368" stroke-width="2"><circle cx="6.5" cy="6.5" r="5.3"/><path d="M10.5 10.5 L16 16"/></svg>
<div class="a" style="left:159px;top:846px;width:1px;height:20px;background:#cbcdd1"></div>
<div class="a" style="left:172px;top:848px;width:16px;height:15px;border:1.5px solid #5f6368;border-radius:3px"></div>
<div class="t" style="left:195px;top:848px;font-size:15px;color:#1f1f1f">保留日志</div>
<div class="a" style="left:267px;top:846px;width:1px;height:20px;background:#cbcdd1"></div>
<div class="a" style="left:279px;top:848px;width:16px;height:15px;border:1.5px solid #5f6368;border-radius:3px"></div>
<div class="t" style="left:302px;top:848px;font-size:15px;color:#1f1f1f">停用缓存</div>
<div class="t" style="left:376px;top:848px;font-size:15px;color:#1f1f1f">已停用节流模式</div>
<svg style="left:501px;top:851px" width="11" height="8" viewBox="0 0 11 8"><path d="M0 0 H11 L5.5 7.5 Z" fill="#5f6368"/></svg>
<svg style="left:531px;top:847px" width="20" height="17" viewBox="0 0 20 17" fill="none" stroke="#5f6368" stroke-width="1.8"><path d="M1 5.5 Q9.5 -2 18 5.5 M4 8.5 Q9.5 3.5 15 8.5 M7 11.5 Q9 10 11 10.5"/><circle cx="15" cy="13" r="2.5" stroke-width="1.5"/></svg>
<div class="a" style="left:564px;top:846px;width:1px;height:20px;background:#cbcdd1"></div>
<svg style="left:578px;top:847px" width="17" height="17" viewBox="0 0 17 17" fill="none" stroke="#5f6368" stroke-width="1.8"><path d="M8.5 12 V1.5 M4 6 L8.5 1.5 L13 6 M1 11.5 V15.5 H16 V11.5"/></svg>
<svg style="left:613px;top:847px" width="17" height="17" viewBox="0 0 17 17" fill="none" stroke="#5f6368" stroke-width="1.8"><path d="M8.5 1 V11.5 M4 7 L8.5 11.5 L13 7 M1 11.5 V15.5 H16 V11.5"/></svg>
<div class="a" style="left:1876px;top:845px;width:2px;height:20px;background:#cdd0d4"></div>
<svg style="left:1891px;top:846px" width="19" height="19" viewBox="0 0 20 20"><path d="M7.51 1.35 L12.49 1.35 L11.07 3.49 L15.10 5.81 L16.25 3.52 L18.73 7.83 L16.18 7.67 L16.18 12.33 L18.73 12.17 L16.25 16.48 L15.10 14.19 L11.07 16.51 L12.49 18.65 L7.51 18.65 L8.93 16.51 L4.90 14.19 L3.75 16.48 L1.27 12.17 L3.82 12.33 L3.82 7.67 L1.27 7.83 L3.75 3.52 L4.90 5.81 L8.93 3.49 Z" fill="none" stroke="#666" stroke-width="1.7" stroke-linejoin="round"/><circle cx="10" cy="10" r="3.1" fill="#666"/></svg>

<!-- devtools row3 -->
<div class="a" style="left:5px;top:876px;width:204px;height:23px;background:#fff"></div>
<div class="t" style="left:9px;top:881px;font-size:15px;color:#80868b">过滤</div>
<div class="a" style="left:225px;top:880px;width:16px;height:15px;border:1.5px solid #5f6368;border-radius:3px"></div>
<div class="t" style="left:247px;top:881px;font-size:15px;color:#1f1f1f">反转</div>
<div class="a" style="left:290px;top:880px;width:16px;height:15px;border:1.5px solid #5f6368;border-radius:3px"></div>
<div class="t" style="left:312px;top:881px;font-size:15px;color:#1f1f1f">隐藏数据网址</div>
<div class="t" style="left:413px;top:881px;font-size:15px;color:#1f1f1f">全部</div>
<div class="a" style="left:453px;top:878px;width:1px;height:20px;background:#cbcdd1"></div>
<div class="a" style="left:459px;top:876px;width:76px;height:24px;background:#dcdee3;border-radius:5px"></div>
<div class="t" style="left:462px;top:881px;font-size:15px;color:#1f1f1f;letter-spacing:-0.5px">Fetch/XHR</div>
<div class="t" style="left:544px;top:881px;font-size:15px;color:#1f1f1f">JS</div>
<div class="t" style="left:571px;top:881px;font-size:15px;color:#1f1f1f">CSS</div>
<div class="t" style="left:608px;top:881px;font-size:15px;color:#1f1f1f">图片</div>
<div class="t" style="left:651px;top:881px;font-size:15px;color:#1f1f1f">媒体</div>
<div class="t" style="left:693px;top:881px;font-size:15px;color:#1f1f1f">字体</div>
<div class="t" style="left:736px;top:881px;font-size:15px;color:#1f1f1f">文档</div>
<div class="t" style="left:778px;top:881px;font-size:15px;color:#1f1f1f">WS</div>
<div class="t" style="left:813px;top:881px;font-size:15px;color:#1f1f1f">Wasm</div>
<div class="t" style="left:866px;top:881px;font-size:15px;color:#1f1f1f">清单</div>
<div class="t" style="left:908px;top:881px;font-size:15px;color:#1f1f1f">其他</div>
<div class="a" style="left:957px;top:880px;width:15px;height:15px;border:1.5px solid #5f6368;border-radius:3px"></div>
<div class="t" style="left:980px;top:881px;font-size:15px;color:#1f1f1f">有已拦截的 Cookie</div>
<div class="a" style="left:1117px;top:880px;width:15px;height:15px;border:1.5px solid #5f6368;border-radius:3px"></div>
<div class="t" style="left:1139px;top:881px;font-size:15px;color:#1f1f1f">被屏蔽的请求</div>
<div class="a" style="left:1242px;top:880px;width:15px;height:15px;border:1.5px solid #5f6368;border-radius:3px"></div>
<div class="t" style="left:1265px;top:881px;font-size:15px;color:#1f1f1f">第三方请求</div>

<!-- title bar icons -->
<svg style="left:1829px;top:12px" width="8" height="13" viewBox="0 0 8 13"><path d="M7 1 L1.5 6.5 L7 12" fill="none" stroke="#8a8a8a" stroke-width="1.1"/></svg>
<svg style="left:1855px;top:12px" width="8" height="13" viewBox="0 0 8 13"><path d="M1 1 L6.5 6.5 L1 12" fill="none" stroke="#8a8a8a" stroke-width="1.1"/></svg>
<svg style="left:1878px;top:10px" width="17" height="17" viewBox="0 0 17 17" fill="none" stroke="#6e6e6e" stroke-width="1.4"><rect x="0.9" y="0.9" width="15.2" height="15.2" rx="2"/><path d="M4.5 1 V6 Q4.5 7.5 6 7.5 H11 Q12.5 7.5 12.5 6 V1 M9 2.5 V5"/></svg>
<!-- logo -->
<svg style="left:4px;top:4px" width="28" height="28" viewBox="0 0 28 28"><path d="M13.7 2.5 L24 7.7 L13.7 13 L3.3 7.7 Z" fill="#eaeaea"/><path d="M9.3 4.2 L13.7 6.5 L17.2 4.8 L17.2 6.2 L13.7 8.6 L9.3 6 Z" fill="#9a9a9a"/><path d="M3.3 7.7 L13.7 13 L13.7 24.7 L3.3 19.5 Z" fill="#a9a9a9"/><path d="M3.3 13.6 L9.5 16.6 L9.5 17.6 L3.3 14.6 Z" fill="#f2f2f2"/><path d="M8.2 16 L9.6 16.7 L9.6 21.8 L8.2 21.1 Z" fill="#3a3a3a"/><path d="M13.7 13 L24 7.7 L24 19.5 L13.7 24.7 Z" fill="#3a3a3a"/><path d="M17.6 15.7 L24 12.5 L24 13.6 L17.6 16.8 Z" fill="#f2f2f2"/><path d="M17.6 16.8 L19.2 16 L19.2 22 L17.6 22.8 Z" fill="#b5b5b5"/><path d="M19.2 16 L24 13.6 L24 19.5 L19.2 22 Z" fill="#161616"/></svg>
<!-- right strip texts -->
<div class="t" style="left:1898px;top:46px;font-size:16px;line-height:20px;width:16px;white-space:normal;color:#111">数据源</div>
<div class="t" style="left:1898px;top:144px;font-size:16px;line-height:20px;width:16px;white-space:normal;color:#111">离线资源</div>

<!-- MODAL -->
<div class="a" id="modal" style="left:734px;top:175px;width:772px;height:459px;background:#fff;border-radius:4px;box-shadow:0 1px 3px rgba(0,0,0,.25)"><div class="a" style="left:-734px;top:-175px;width:1920px;height:902px">
<div class="t" style="left:759px;top:205px;font-size:20px;color:#111">选择组件</div>
<svg style="left:1464px;top:204px" width="14" height="14" viewBox="0 0 14 14"><path d="M1 1 L13 13 M13 1 L1 13" stroke="#909399" stroke-width="1.1"/></svg>
<div class="t" style="left:759px;top:257px;font-size:18px;color:#409eff">ext</div>
<div class="a" style="left:759px;top:287px;width:722px;height:3px;background:#e4e7ed"></div>
<div class="a" style="left:759px;top:287px;width:25px;height:3px;background:#409eff"></div>
<div class="a" style="left:759px;top:307px;width:90px;height:90px;border:1px solid #e4e4e4;border-radius:4px"></div>
<svg style="left:759px;top:307px" width="90" height="90" viewBox="0 0 90 90"><path d="M45 66.5 L32.77 54.23 A17.3 17.3 0 1 1 57.23 54.23 Z" fill="none" stroke="#2b2b2b" stroke-linecap="round" stroke-linejoin="round" stroke-width="2.7"/><circle cx="45" cy="42" r="7.7" fill="none" stroke="#2b2b2b" stroke-linecap="round" stroke-linejoin="round" stroke-width="2.7"/></svg>
<div class="t" style="left:759px;top:401px;width:100px;text-align:center;font-size:18px;color:#606266">地址选择</div>
<div class="a" style="left:859px;top:307px;width:90px;height:90px;border:1px solid #e4e4e4;border-radius:4px"></div>
<svg style="left:859px;top:307px" width="90" height="90" viewBox="0 0 90 90"><circle cx="45" cy="45" r="18.7" fill="none" stroke="#2b2b2b" stroke-linecap="round" stroke-linejoin="round" stroke-width="2.7"/><path d="M21.5 45 H32 M58 45 H68.5 M45 21.5 V32 M45 58 V68.5" fill="none" stroke="#2b2b2b" stroke-linecap="round" stroke-linejoin="round" stroke-width="2.7"/><circle cx="45" cy="45" r="3.9" fill="#2b2b2b"/></svg>
<div class="t" style="left:859px;top:401px;width:100px;text-align:center;font-size:18px;color:#606266">定位</div>
<div class="a" style="left:959px;top:307px;width:90px;height:90px;border:1px solid #e4e4e4;border-radius:4px"></div>
<svg style="left:959px;top:307px" width="90" height="90" viewBox="0 0 90 90"><g fill="none" stroke="#2b2b2b" stroke-linecap="round" stroke-linejoin="round" stroke-width="2.6"><rect x="21.45" y="21.25" width="17.6" height="17.8" rx="2"/><rect x="50.75" y="21.25" width="18" height="17.8" rx="2"/><rect x="21.45" y="50.75" width="17.6" height="17.8" rx="2"/><path d="M45 21.5 V39 M45 51 V65 M53.7 56.5 V68.5 M61.2 53.2 V68.5 M68.5 50.8 V68.5"/></g><path d="M21.5 44.85 H68.5" fill="none" stroke="#2b2b2b" stroke-linecap="round" stroke-linejoin="round" stroke-width="3.2"/></svg>
<div class="t" style="left:959px;top:401px;width:100px;text-align:center;font-size:18px;color:#606266">条码</div>
<div class="a" style="left:1059px;top:307px;width:90px;height:90px;border:1px solid #e4e4e4;border-radius:4px"></div>
<svg style="left:1059px;top:307px" width="90" height="90" viewBox="0 0 90 90"><path d="M30.9 31 H58.1 M44.5 31 V61.5" fill="none" stroke="#3a3636" stroke-width="3.2" stroke-linecap="round"/></svg>
<div class="t" style="left:1059px;top:401px;width:100px;text-align:center;font-size:18px;color:#606266">单行文本</div>
<div class="a" style="left:1159px;top:307px;width:90px;height:90px;border:1px solid #e4e4e4;border-radius:4px"></div>
<svg style="left:1159px;top:307px" width="90" height="90" viewBox="0 0 90 90"><rect x="21.7" y="26.5" width="46.8" height="36.8" rx="2" fill="none" stroke="#000" stroke-width="3"/><path d="M22 28 L45 49 L68 28 M22.5 62 L38.5 46 M52 46 L68 62" fill="none" stroke="#000" stroke-width="2.6"/></svg>
<div class="t" style="left:1159px;top:401px;width:100px;text-align:center;font-size:18px;color:#606266">邮件</div>
<div class="a" style="left:1259px;top:307px;width:90px;height:90px;border:1px solid #e4e4e4;border-radius:4px"></div>
<svg style="left:1259px;top:307px" width="90" height="90" viewBox="0 0 90 90"><path d="M31 23.8 L45.3 43 L59.75 23.8" fill="none" stroke="#2b2b2b" stroke-width="3.4"/><rect x="27.25" y="43" width="35.75" height="3.75" fill="#2b2b2b"/><rect x="27.25" y="51.5" width="35.75" height="4.2" fill="#2b2b2b"/><rect x="43.3" y="43" width="4.4" height="23.75" fill="#2b2b2b"/></svg>
<div class="t" style="left:1259px;top:401px;width:100px;text-align:center;font-size:18px;color:#606266">金额</div>
<div class="a" style="left:1359px;top:307px;width:90px;height:90px;border:1px solid #e4e4e4;border-radius:4px"></div>
<svg style="left:1359px;top:307px" width="90" height="90" viewBox="0 0 90 90"><g fill="none" stroke="#2b2b2b" stroke-linecap="round" stroke-linejoin="round" stroke-width="2.2"><path d="M21.1 34.6 V26 Q21.1 20.9 26.2 20.9 H34.8 M55 20.9 H63.6 Q68.7 20.9 68.7 26 V34.6 M21.1 54.8 V63.4 Q21.1 68.5 26.2 68.5 H34.8 M55 68.5 H63.6 Q68.7 68.5 68.7 63.4 V54.8"/></g><g fill="none" stroke="#333" stroke-width="1.3"><rect x="28.35" y="32.95" width="33.3" height="23.7" rx="1.5"/><circle cx="38" cy="41.5" r="3.7"/><path d="M31.5 52.5 A6.5 6.5 0 0 1 44.5 52.5 M47.8 40.5 H58.6 M47.8 45.5 H58.6 M47.8 50.5 H54.8"/></g></svg>
<div class="t" style="left:1359px;top:401px;width:100px;text-align:center;font-size:18px;color:#606266">证件识别</div>
<div class="a" style="left:759px;top:434px;width:90px;height:90px;border:1px solid #e4e4e4;border-radius:4px"></div>
<svg style="left:759px;top:434px" width="90" height="90" viewBox="0 0 90 90"><path d="M52 39 L48.5 35.5 Q48 33 49 28 Q49.5 26.5 52 26.3 L59.5 26.2 Q63 26.5 63 30 Q62 42 56 48.5 Q48 57 31 61.5 Q27 62 26.8 58.5 L26.8 50.5 Q27 48.5 29 48 L36 46.5 L40.5 50.5 Q47 46.5 52 39 Z" fill="none" stroke="#2b2b2b" stroke-linecap="round" stroke-linejoin="round" stroke-width="2.7"/></svg>
<div class="t" style="left:759px;top:528px;width:100px;text-align:center;font-size:18px;color:#606266">手机号</div>
<div class="a" style="left:859px;top:434px;width:90px;height:90px;border:1px solid #e4e4e4;border-radius:4px"></div>
<svg style="left:859px;top:434px" width="90" height="90" viewBox="0 0 90 90"><g fill="none" stroke="#2b2b2b" stroke-linecap="round" stroke-linejoin="round" stroke-width="2.8"><path d="M22 64 Q21.5 55 26.8 50.5 L56 21.7 Q57.5 20.5 59 21.7 L64 26.8 Q65 28.2 63.8 29.5 L34.6 58.5 Q29 64 22 64 Z M48.7 30.2 L55.5 37"/><path d="M39 64 Q48 63 55 61.5 Q51 58 52.5 54.5 Q55 51 58.5 53.5 Q61 57 57 61 Q62 64.5 68.5 59"/></g></svg>
<div class="t" style="left:859px;top:528px;width:100px;text-align:center;font-size:18px;color:#606266">签名</div>
<div class="a" style="left:959px;top:434px;width:90px;height:90px;border:1px solid #e4e4e4;border-radius:4px"></div>
<svg style="left:959px;top:434px" width="90" height="90" viewBox="0 0 90 90"><g fill="#2b2b2b"><rect x="21.5" y="29.2" width="24.5" height="7.7"/><rect x="30.3" y="21.5" width="7.4" height="23.3"/><path d="M22 68.7 L32.3 68.7 L68.6 30.9 L68.6 19 Z"/><rect x="46.9" y="57.5" width="21.85" height="7.7"/></g></svg>
<div class="t" style="left:959px;top:528px;width:100px;text-align:center;font-size:18px;color:#606266">计数器</div>
<div class="a" style="left:1059px;top:434px;width:90px;height:90px;border:1px solid #e4e4e4;border-radius:4px"></div>
<svg style="left:1059px;top:434px" width="90" height="90" viewBox="0 0 90 90"><path d="M23 34.5 L33.5 44.7 L23 55.2 M40.3 34.5 L50.8 44.7 L40.3 55.2 M57.6 34.5 L68.1 44.7 L57.6 55.2" fill="none" stroke="#2b2b2b" stroke-linecap="round" stroke-linejoin="round" stroke-width="4"/></svg>
<div class="t" style="left:1059px;top:528px;width:100px;text-align:center;font-size:18px;color:#606266">步骤条</div>
<div class="a" style="left:1159px;top:434px;width:90px;height:90px;border:1px solid #e4e4e4;border-radius:4px"></div>
<svg style="left:1159px;top:434px" width="90" height="90" viewBox="0 0 90 90"><rect x="24.5" y="23.4" width="41" height="40.7" fill="none" stroke="#111" stroke-width="2.2" stroke-dasharray="5 3"/><text x="45" y="57" text-anchor="middle" font-family="Liberation Serif" font-size="40" fill="#111">T</text></svg>
<div class="t" style="left:1159px;top:528px;width:100px;text-align:center;font-size:18px;color:#606266">多行文本</div>
<div class="a" style="left:1259px;top:434px;width:90px;height:90px;border:1px solid #e4e4e4;border-radius:4px"></div>
<svg style="left:1259px;top:434px" width="90" height="90" viewBox="0 0 90 90"><rect x="15" y="19.8" width="59" height="48" rx="8" fill="none" stroke="#2b2b2b" stroke-width="3.5"/><path d="M38 34 V55.5 Q38 58 40.5 56.5 L55 46.5 Q56.5 44.8 55 43.3 L40.5 33.2 Q38 31.8 38 34 Z" fill="none" stroke="#2b2b2b" stroke-width="3.4" stroke-linejoin="round"/></svg>
<div class="t" style="left:1259px;top:528px;width:100px;text-align:center;font-size:18px;color:#606266">视频</div>
</div>

</div>

</body></html>
